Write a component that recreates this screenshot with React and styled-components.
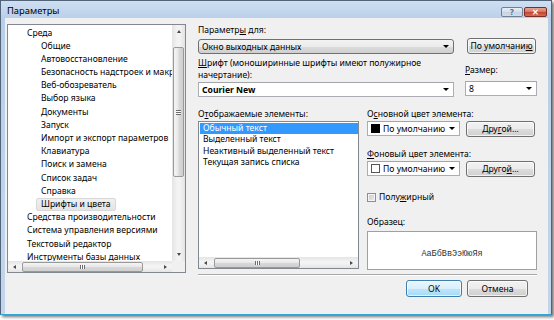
import React from 'react';
import styled, { createGlobalStyle, css } from 'styled-components';

const GlobalStyle = createGlobalStyle`
  html, body { margin: 0; padding: 0; background: #fff; }
  body {
    width: 554px; height: 320px; overflow: hidden;
    font-family: "Noto Sans", "Open Sans", sans-serif;
    font-size: 8.6px; color: #000;
  }
`;

const Window = styled.div`
  width: 550px;
  height: 313px;
  border: 1px solid #52647a;
  border-bottom-color: #2fa6d6;
  background: linear-gradient(#cfdff1, #b9cfe8 18px, #c2d5eb);
  box-shadow: 2px 2px 3px rgba(0, 0, 0, 0.55);
  display: flex;
  flex-direction: column;
`;

const TitleBar = styled.div`
  height: 17px;
  display: flex;
  align-items: flex-start;
  padding-left: 6px;
`;

const Title = styled.div`
  padding-top: 4px;
  line-height: 12px;
  font-size: 9.4px;
`;

const Caption = styled.div`
  margin: 6px 4px 0 auto;
  display: flex;
  gap: 1px;
`;

const CapButton = styled.div`
  box-sizing: border-box;
  width: ${p => p.$w}px;
  height: 10px;
  border: 1px solid ${p => (p.$close ? '#7a2e25' : '#6f819a')};
  border-radius: 2px;
  display: flex;
  align-items: center;
  justify-content: center;
  font-size: 8px;
  font-weight: bold;
  line-height: 8px;
  color: ${p => (p.$close ? '#fff' : '#56677e')};
  background: ${p =>
    p.$close
      ? 'linear-gradient(#e8a594, #d3745f 50%, #c4442d 51%, #d86b50)'
      : 'linear-gradient(#e6eef7, #d2deec 50%, #c3d3e6 51%, #d0dcea)'};
`;

const Client = styled.div`
  flex: 1;
  margin: 0 3px 0 4px;
  background: #f0f0f0;
  display: flex;
  padding: 6px 0 0 2px;
`;

/* ---------- scrollbars ---------- */

const ScrollBox = styled.div`
  box-sizing: border-box;
  border: 1px solid #828790;
  background: #fff;
  display: grid;
  grid-template-columns: ${p => (p.$vscroll ? '1fr 13px' : '1fr')};
  grid-template-rows: 1fr 11px;
  overflow: hidden;
`;

const VTrack = styled.div`
  grid-row: 1;
  grid-column: 2;
  display: flex;
  flex-direction: column;
  align-items: center;
  background: linear-gradient(90deg, #e4e4e4, #f3f3f3 40%, #f3f3f3 60%, #e4e4e4);
`;

const HTrack = styled.div`
  grid-row: 2;
  grid-column: 1;
  display: flex;
  align-items: center;
  background: linear-gradient(#e4e4e4, #f3f3f3 40%, #f3f3f3 60%, #e4e4e4);
`;

const Corner = styled.div`
  grid-row: 2;
  grid-column: 2;
  background: #f0f0f0;
`;

const ScrollArrow = styled.div`
  flex: none;
  width: 13px;
  height: ${p => (p.$h ? 11 : 13)}px;
  display: flex;
  align-items: center;
  justify-content: center;
  &::after {
    content: '';
    width: 0;
    height: 0;
    ${p =>
      p.$dir === 'up' &&
      css`border: 2.5px solid transparent; border-top: 0; border-bottom: 3px solid #4a4a4a;`}
    ${p =>
      p.$dir === 'down' &&
      css`border: 2.5px solid transparent; border-bottom: 0; border-top: 3px solid #4a4a4a;`}
    ${p =>
      p.$dir === 'left' &&
      css`border: 2.5px solid transparent; border-left: 0; border-right: 3px solid #4a4a4a;`}
    ${p =>
      p.$dir === 'right' &&
      css`border: 2.5px solid transparent; border-right: 0; border-left: 3px solid #4a4a4a;`}
  }
`;

const Thumb = styled.div`
  box-sizing: border-box;
  flex: none;
  border: 1px solid #999;
  border-radius: 2px;
  display: flex;
  align-items: center;
  justify-content: center;
  ${p =>
    p.$h
      ? css`
          height: 10px;
          width: ${p.$len}px;
          margin-left: ${p.$off}px;
          background: linear-gradient(#f5f5f5, #e8e8e8 45%, #d8d8d8 55%, #cfcfcf);
          &::after {
            content: '';
            width: 5px;
            height: 4px;
            background: repeating-linear-gradient(90deg, #6d6d6d 0 1px, #fafafa 1px 2px);
          }
        `
      : css`
          width: 11px;
          height: ${p.$len}px;
          margin-top: ${p.$off}px;
          background: linear-gradient(90deg, #f5f5f5, #e8e8e8 45%, #d8d8d8 55%, #cfcfcf);
          &::after {
            content: '';
            width: 5px;
            height: 5px;
            background: repeating-linear-gradient(#6d6d6d 0 1px, #fafafa 1px 2px);
          }
        `}
`;

const Spacer = styled.div`
  flex: 1;
`;

/* ---------- tree ---------- */

const Tree = styled(ScrollBox)`
  flex: none;
  width: 179px;
  height: 249px;
`;

const TreeBody = styled.div`
  grid-row: 1;
  grid-column: 1;
  overflow: hidden;
  padding-top: 1.5px;
`;

const TreeItem = styled.div`
  height: 13.2px;
  line-height: 13.2px;
  white-space: nowrap;
  padding-left: ${p => (p.$level === 2 ? 33 : 19)}px;
`;

const TreeText = styled.span`
  ${p =>
    p.$selected &&
    css`
      display: inline-block;
      line-height: 11px;
      margin-left: -5px;
      padding: 0 4px;
      background: linear-gradient(#f0f0f0, #e4e4e4);
      border: 1px solid #d9d9d9;
      border-radius: 2px;
    `}
`;

/* ---------- right side ---------- */

const Right = styled.div`
  margin-left: 12px;
  width: 339px;
  display: flex;
  flex-direction: column;
`;

const Label = styled.div`
  line-height: ${p => p.$lh || 13}px;
  white-space: nowrap;
  margin-top: ${p => p.$mt || 0}px;
`;

const Row = styled.div`
  display: flex;
  align-items: flex-start;
  margin-top: ${p => p.$mt || 0}px;
  gap: ${p => p.$gap || 0}px;
`;

const Combo = styled.div`
  box-sizing: border-box;
  flex: none;
  width: ${p => p.$w}px;
  height: ${p => p.$h || 15}px;
  margin-top: ${p => p.$mt || 0}px;
  margin-left: ${p => p.$ml || 0}px;
  display: flex;
  align-items: center;
  gap: 3px;
  padding: 0 4px 0 3px;
  overflow: hidden;
  white-space: nowrap;
  font-weight: ${p => (p.$bold ? 'bold' : 'normal')};
  ${p =>
    p.$flat
      ? css`
          border: 1px solid #707070;
          border-radius: 3px;
          background: linear-gradient(#f3f3f3, #ebebeb 50%, #dddddd 51%, #cfcfcf);
        `
      : css`
          border: 1px solid #abadb3;
          border-top-color: #a3a5aa;
          background: #fff;
        `}
`;

const ComboText = styled.span`
  flex: 1;
  overflow: hidden;
  white-space: nowrap;
`;

const DropArrow = styled.span`
  flex: none;
  width: 0;
  height: 0;
  border-left: 3px solid transparent;
  border-right: 3px solid transparent;
  border-top: 3px solid #000;
`;

const Swatch = styled.span`
  flex: none;
  box-sizing: border-box;
  width: 9px;
  height: 9px;
  border: 1px solid ${p => (p.$color === '#000' ? '#000' : '#555')};
  background: ${p => p.$color};
`;

const Button = styled.div`
  box-sizing: border-box;
  flex: none;
  width: ${p => p.$w}px;
  height: ${p => p.$h || 16}px;
  margin-left: ${p => p.$ml || 0}px;
  border: 1px solid #707070;
  border-radius: 3px;
  display: flex;
  align-items: center;
  justify-content: center;
  white-space: nowrap;
  box-shadow: inset 0 0 0 1px rgba(255, 255, 255, 0.7);
  background: linear-gradient(#f2f2f2, #ebebeb 50%, #dddddd 51%, #cfcfcf);
  ${p =>
    p.$default &&
    css`
      border-color: #3c7fb1;
      background: linear-gradient(#eaf6fd, #d9f0fc 50%, #bee6fd 51%, #a7d9f5);
    `}
`;

const Lower = styled.div`
  display: grid;
  grid-template-columns: 161px 170px;
  column-gap: 8px;
  margin-top: 11px;
`;

const Column = styled.div`
  display: flex;
  flex-direction: column;
`;

const ListBox = styled(ScrollBox)`
  height: 148px;
`;

const ListBody = styled.div`
  grid-row: 1;
  grid-column: 1;
  padding-top: 1px;
  overflow: hidden;
`;

const ListItem = styled.div`
  height: 11.4px;
  line-height: 11.4px;
  margin-left: 1px;
  padding-left: 3px;
  white-space: nowrap;
  ${p =>
    p.$selected &&
    css`
      background: #3399ff;
      color: #fff;
    `}
`;

const CheckRow = styled.label`
  display: flex;
  align-items: center;
  gap: 3px;
  line-height: 13px;
  margin-top: 14px;
`;

const CheckBox = styled.span`
  box-sizing: border-box;
  width: 9px;
  height: 9px;
  border: 1px solid #8e8f8f;
  background: linear-gradient(135deg, #cbcbcb, #ececec);
  box-shadow: inset 0 0 0 1px #f4f4f4;
`;

const Sample = styled.div`
  box-sizing: border-box;
  height: 39px;
  margin-top: 2px;
  border: 1px solid #a0a0a0;
  background: #fff;
  display: flex;
  justify-content: center;
  align-items: center;
  padding-top: 7px;
  font-family: "Liberation Mono", "Courier New", monospace;
  font-size: 8.5px;
  color: #333;
`;

const Separator = styled.div`
  margin-top: 4px;
  height: 0;
  border-top: 1px solid #a8a8a8;
  border-bottom: 1px solid #fff;
`;

const Footer = styled.div`
  display: flex;
  justify-content: flex-end;
  gap: 5px;
  margin-top: 4px;
  padding-right: 9px;
`;

const treeItems = [
  [1, 'Среда'],
  [2, 'Общие'],
  [2, 'Автовосстановление'],
  [2, 'Безопасность надстроек и макросов'],
  [2, 'Веб-обозреватель'],
  [2, 'Выбор языка'],
  [2, 'Документы'],
  [2, 'Запуск'],
  [2, 'Импорт и экспорт параметров'],
  [2, 'Клавиатура'],
  [2, 'Поиск и замена'],
  [2, 'Список задач'],
  [2, 'Справка'],
  [2, 'Шрифты и цвета', true],
  [1, 'Средства производительности'],
  [1, 'Система управления версиями'],
  [1, 'Текстовый редактор'],
  [1, 'Инструменты базы данных'],
];

const listItems = [
  'Обычный текст',
  'Выделенный текст',
  'Неактивный выделенный текст',
  'Текущая запись списка',
];

const App = () => {
  return (
    <>
      <GlobalStyle />
      <Window>
        <TitleBar>
          <Title>Параметры</Title>
          <Caption>
            <CapButton $w={22}>?</CapButton>
            <CapButton $w={23} $close>✕</CapButton>
          </Caption>
        </TitleBar>
        <Client>
          <Tree $vscroll>
            <TreeBody>
              {treeItems.map(([level, text, selected]) => (
                <TreeItem key={text} $level={level}>
                  <TreeText $selected={selected}>{text}</TreeText>
                </TreeItem>
              ))}
            </TreeBody>
            <VTrack>
              <ScrollArrow $dir="up" />
              <Thumb $len={130} $off={9} />
              <Spacer />
              <ScrollArrow $dir="down" />
            </VTrack>
            <HTrack>
              <ScrollArrow $h $dir="left" />
              <Thumb $h $len={121} $off={1} />
              <Spacer />
              <ScrollArrow $h $dir="right" />
            </HTrack>
            <Corner />
          </Tree>

          <Right>
            <Label>Параметр<u>ы</u> для:</Label>
            <Row $mt={1}>
              <Combo $flat $w={256} $h={15} $mt={1}>
                <ComboText>Окно выходных данных</ComboText>
                <DropArrow />
              </Combo>
              <Button $w={69} $ml={13}>
                По умолчани<u>ю</u>
              </Button>
            </Row>
            <Row $mt={3}>
              <Label $lh={12} style={{ width: 267 }}>
                <u>Ш</u>рифт (моноширинные шрифты имеют полужирное
                <br />
                начертание):
              </Label>
              <Label $lh={12} $mt={7}>
                <u>Р</u>азмер:
              </Label>
            </Row>
            <Row>
              <Combo $w={256} $h={15} $mt={1} $bold>
                <ComboText>Courier New</ComboText>
                <DropArrow />
              </Combo>
              <Combo $w={72} $h={15} $ml={11}>
                <ComboText>8</ComboText>
                <DropArrow />
              </Combo>
            </Row>

            <Lower>
              <Column>
                <Label>О<u>т</u>ображаемые элементы:</Label>
                <ListBox>
                  <ListBody>
                    {listItems.map((item, i) => (
                      <ListItem key={item} $selected={i === 0}>
                        {item}
                      </ListItem>
                    ))}
                  </ListBody>
                  <HTrack>
                    <ScrollArrow $h $dir="left" />
                    <Thumb $h $len={86} $off={2} />
                    <Spacer />
                    <ScrollArrow $h $dir="right" />
                  </HTrack>
                </ListBox>
              </Column>

              <Column>
                <Label>О<u>с</u>новной цвет элемента:</Label>
                <Row $gap={6}>
                  <Combo $w={93} $h={15}>
                    <Swatch $color="#000" />
                    <ComboText>По умолчанию</ComboText>
                    <DropArrow />
                  </Combo>
                  <Button $w={69}>
                    Дру<u>г</u>ой...
                  </Button>
                </Row>
                <Label $mt={11}>
                  <u>Ф</u>оновый цвет элемента:
                </Label>
                <Row $gap={6}>
                  <Combo $w={93} $h={15}>
                    <Swatch $color="#fff" />
                    <ComboText>По умолчанию</ComboText>
                    <DropArrow />
                  </Combo>
                  <Button $w={69}>
                    Друго<u>й</u>...
                  </Button>
                </Row>
                <CheckRow>
                  <CheckBox />
                  <span>
                    Полу<u>ж</u>ирный
                  </span>
                </CheckRow>
                <Label $mt={12}>Образец:</Label>
                <Sample>АаБбВвЭэЮюЯя</Sample>
              </Column>
            </Lower>

            <Separator />
            <Footer>
              <Button $default $w={56} $h={17}>
                OK
              </Button>
              <Button $w={61} $h={17}>
                Отмена
              </Button>
            </Footer>
          </Right>
        </Client>
      </Window>
    </>
  );
};

export default App;
